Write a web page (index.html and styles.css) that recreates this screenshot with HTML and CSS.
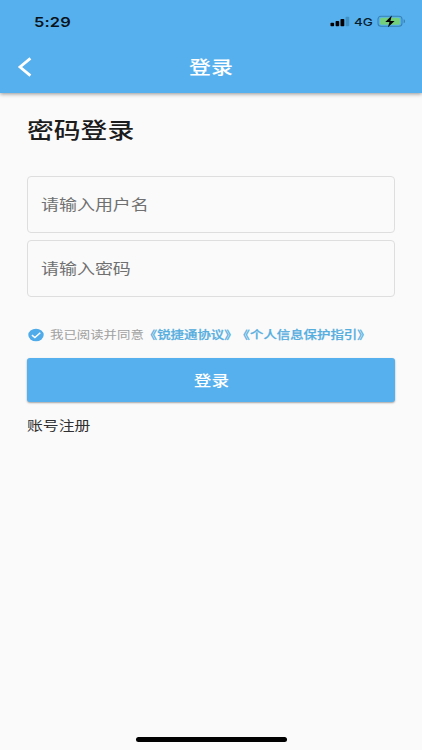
FILE: index.html
```html
<!DOCTYPE html>
<html lang="zh-CN">
<head>
<meta charset="utf-8">
<title>登录</title>
<link rel="stylesheet" href="styles.css">
</head>
<body>
<div class="screen">
  <header class="top">
    <div class="status">
      <span class="wide time">5:29</span>
      <div class="indicators">
        <svg class="signal" width="20" height="11" viewBox="0 0 20 11">
          <rect x="0.5" y="6.8" width="3.6" height="3.5" rx="0.8"/>
          <rect x="5.6" y="5" width="3.6" height="5.3" rx="0.8"/>
          <rect x="10.5" y="2.9" width="3.8" height="7.4" rx="0.8"/>
          <rect x="15.6" y="0.7" width="3.6" height="9.6" rx="0.8" fill="#3f91c4"/>
        </svg>
        <span class="wide network">4G</span>
        <svg class="battery" width="29" height="13" viewBox="0 0 29 13">
          <rect x="1" y="1.2" width="24" height="10" rx="3" fill="none" stroke="#3983b3" stroke-width="1.1"/>
          <rect x="3" y="2.7" width="20" height="7.1" rx="1.5" fill="#74cf7c"/>
          <path d="M26.6 4.3v4c1.2-.4 1.4-1.1 1.4-2s-.2-1.6-1.4-2z" fill="#3983b3"/>
          <path d="M14.8.6 8.3 7h4.2l-1.6 5.3L17.6 6h-4.2z" fill="#000"/>
        </svg>
      </div>
    </div>
    <nav class="bar">
      <svg class="back" width="16" height="22" viewBox="0 0 16 22"><path d="M13.4 2.4 3 11l10.4 8.6" fill="none" stroke="#fff" stroke-width="2.8"/></svg>
      <h1 class="wide title">登录</h1>
    </nav>
  </header>
  <main class="content">
    <h2 class="wide heading">密码登录</h2>
    <div class="field"><span class="wide">请输入用户名</span></div>
    <div class="field"><span class="wide">请输入密码</span></div>
    <div class="terms">
      <svg class="check" width="16" height="14" viewBox="0 0 16 14"><ellipse cx="8" cy="7" rx="7.7" ry="6.3" fill="#4fabe9"/><path d="m3.9 7.1 3 2.5 5.4-4.9" fill="none" stroke="#fff" stroke-width="1.4"/></svg>
      <span class="wide agreement">我已阅读并同意<b>《锐捷通协议》</b><b>《个人信息保护指引》</b></span>
    </div>
    <div class="submit"><span class="wide">登录</span></div>
    <span class="wide register">账号注册</span>
  </main>
  <div class="home"></div>
</div>
</body>
</html>
```
FILE: styles.css
```css
* { box-sizing: border-box; }
body {
  margin: 0;
  background: #fafafa;
  font-family: "Noto Sans CJK SC", sans-serif;
}
.screen {
  height: 750px;
  display: flex;
  flex-direction: column;
  overflow: hidden;
}
.wide {
  display: inline-block;
  white-space: nowrap;
  transform: scaleX(1.218);
  transform-origin: left center;
}
.top {
  height: 93px;
  background: #56b0ee;
  box-shadow: 0 1px 4px rgba(0, 0, 0, .42);
}
.status {
  height: 43px;
  padding: 0 16px 0 34px;
  display: flex;
  align-items: center;
  justify-content: space-between;
}
.time {
  font: 600 13.5px/16px Inter, sans-serif;
  letter-spacing: .1px;
  color: #08121a;
}
.indicators { display: flex; align-items: center; }
.network {
  width: 19px;
  margin: 1px 4px 0 4px;
  font: 500 11px/14px Inter, sans-serif;
  color: #08202e;
}
.bar {
  height: 50px;
  display: grid;
  grid-template-columns: 1fr auto 1fr;
  align-items: center;
  padding: 0 17px;
}
.back { margin-top: -2px; }
.title {
  margin: 0;
  padding-bottom: 5px;
  font-size: 18px;
  font-weight: 500;
  line-height: 26px;
  color: #fff;
  transform-origin: center;
}
.content {
  flex: 1;
  padding: 19px 27px 0;
  display: flex;
  flex-direction: column;
  align-items: flex-start;
}
.heading {
  margin: 0 0 32px;
  font-size: 22px;
  font-weight: 500;
  line-height: 32px;
  color: #1c1c1c;
}
.field {
  width: 368px;
  height: 57px;
  margin-bottom: 7px;
  padding: 0 13px 3px;
  display: flex;
  align-items: center;
  border: 1px solid #dedede;
  border-radius: 4px;
  font-size: 14.75px;
  color: #707070;
}
.terms {
  height: 22px;
  margin: 20px 0 12px 1px;
  display: flex;
  align-items: center;
  gap: 6px;
  font-size: 11px;
  color: #a0a0a0;
}
.agreement {
  padding-bottom: 2px;
  text-spacing-trim: space-all;
}
.agreement b {
  font-weight: 500;
  color: #56aedf;
  -webkit-text-stroke: .25px #56aedf;
}
.agreement b + b { margin-left: -.8px; }
.submit {
  width: 368px;
  height: 44px;
  padding-bottom: 2px;
  display: flex;
  align-items: center;
  justify-content: center;
  border-radius: 3px;
  background: #56b0ee;
  box-shadow: 0 1px 2px rgba(0, 0, 0, .35);
  font-size: 14.5px;
  font-weight: 500;
  color: #fff;
}
.submit .wide { transform-origin: center; }
.register {
  margin-top: 13px;
  font-size: 13px;
  line-height: 20px;
  color: #303030;
}
.home {
  width: 151px;
  height: 5px;
  margin: 0 auto 8px;
  border-radius: 3px;
  background: #000;
}
```
